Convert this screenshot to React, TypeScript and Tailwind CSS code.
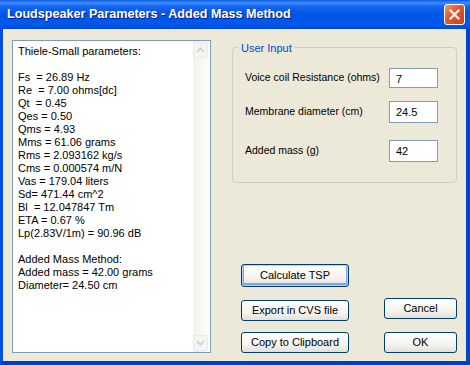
const lines = [
  'Thiele-Small parameters:',
  '',
  'Fs  = 26.89 Hz',
  'Re  = 7.00 ohms[dc]',
  'Qt  = 0.45',
  'Qes = 0.50',
  'Qms = 4.93',
  'Mms = 61.06 grams',
  'Rms = 2.093162 kg/s',
  'Cms = 0.000574 m/N',
  'Vas = 179.04 liters',
  'Sd= 471.44 cm^2',
  'Bl  = 12.047847 Tm',
  'ETA = 0.67 %',
  'Lp(2.83V/1m) = 90.96 dB',
  '',
  'Added Mass Method:',
  'Added mass = 42.00 grams',
  'Diameter= 24.50 cm',
];

function Arrow({ up }: { up?: boolean }) {
  return (
    <div className="w-[15px] h-[16px] rounded-[2px] border border-[#E7EBF1] bg-[#F4F5F1] flex items-center justify-center">
      <svg width="9" height="6" viewBox="0 0 9 6">
        <path
          d={up ? 'M1 5 L4.5 1.5 L8 5' : 'M1 1 L4.5 4.5 L8 1'}
          fill="none"
          stroke="#C9CFD9"
          strokeWidth="1.6"
        />
      </svg>
    </div>
  );
}

function XpButton({ label, def, className }: { label: string; def?: boolean; className: string }) {
  return (
    <button
      className={
        'rounded-[3px] border border-[#003C74] bg-[linear-gradient(to_bottom,#FFFFFF_0%,#F5F4EF_60%,#E3E0D6_100%)] text-[11px] text-black ' +
        (def ? 'shadow-[inset_0_0_0_1px_#B9D1F7,inset_0_-1px_0_2px_#7AA3E8] ' : '') +
        className
      }
    >
      {label}
    </button>
  );
}

function Field({ label, value, h, mt }: { label: string; value: string; h: string; mt: string }) {
  return (
    <div className={'flex items-center ' + mt}>
      <span className="w-[144px] text-[10.5px] text-black">{label}</span>
      <div className={'w-[49px] border border-[#7F9DB9] bg-white pl-[6px] pt-[2px] text-[11px] text-black ' + h}>
        {value}
      </div>
    </div>
  );
}

export default function App() {
  return (
    <div className="w-[470px] h-[365px] flex flex-col bg-[#0054E3] font-['Liberation_Sans',Arial,sans-serif]">
      <div className="h-[29px] flex items-center justify-between pl-[7px] pr-[5px] bg-[linear-gradient(to_bottom,#0A5BE0_0%,#3D8DFF_10%,#1665F0_22%,#0055E5_50%,#0058EC_85%,#0048D0_100%)]">
        <span className="text-white font-bold text-[12.6px] [text-shadow:1px_1px_0_#0A1E8C]">
          Loudspeaker Parameters - Added Mass Method
        </span>
        <div className="w-[21px] h-[21px] rounded-[3px] border border-white bg-[linear-gradient(135deg,#F09878_0%,#E2552F_45%,#C8401D_100%)] flex items-center justify-center">
          <svg width="11" height="11" viewBox="0 0 11 11">
            <path d="M1.5 1.5 L9.5 9.5 M9.5 1.5 L1.5 9.5" stroke="white" strokeWidth="2.2" strokeLinecap="square" />
          </svg>
        </div>
      </div>
      <div className="flex-1 flex border-l-[3px] border-r-[4px] border-b-[4px] border-l-[#0050DC] border-r-[#0044C8] border-b-[#0040C0] bg-[#ECE9D8] pl-[9px] pt-[11px]">
        <div className="w-[199px] h-[313px] border border-[#7F9DB9] bg-white flex">
          <div className="flex-1 pl-[5px] pt-[4px] text-[11px] leading-[13px] text-black whitespace-pre">
            {lines.map((l, i) => (
              <div key={i} className="h-[13px]">{l}</div>
            ))}
          </div>
          <div className="w-[17px] flex flex-col justify-between bg-[linear-gradient(to_right,#F3F1EC,#FEFEFB)] py-[1px] pr-[1px]">
            <Arrow up />
            <Arrow />
          </div>
        </div>
        <div className="ml-[21px] w-[225px] flex flex-col">
          <div className="relative mt-[7px] h-[136px] rounded-[4px] border border-[#D0D0BF] pl-[12px] pt-[20px]">
            <span className="absolute left-[6px] top-[-8px] bg-[#ECE9D8] px-[2px] text-[11px] text-[#0046D5]">User Input</span>
            <Field label="Voice coil Resistance (ohms)" value="7" h="h-[20px]" mt="mt-0" />
            <Field label="Membrane diameter (cm)" value="24.5" h="h-[22px]" mt="mt-[13px]" />
            <Field label="Added mass (g)" value="42" h="h-[22px]" mt="mt-[17px]" />
          </div>
          <div className="flex items-end justify-between pl-[9px] mt-[81px]">
            <div className="flex flex-col">
              <XpButton label="Calculate TSP" def className="w-[108px] h-[23px]" />
              <XpButton label="Export in CVS file" className="w-[108px] h-[21px] mt-[13px]" />
              <XpButton label="Copy to Clipboard" className="w-[108px] h-[21px] mt-[11px]" />
            </div>
            <div className="flex flex-col">
              <XpButton label="Cancel" className="w-[73px] h-[21px]" />
              <XpButton label="OK" className="w-[73px] h-[21px] mt-[13px]" />
            </div>
          </div>
        </div>
      </div>
    </div>
  );
}
